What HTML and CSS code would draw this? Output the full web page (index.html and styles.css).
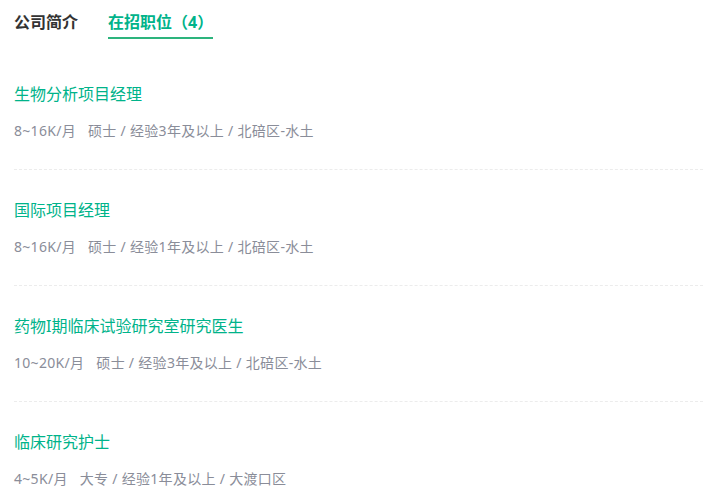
FILE: index.html
```html
<!DOCTYPE html>
<html lang="zh-CN">
<head>
  <meta charset="UTF-8">
  <title>在招职位</title>
  <link rel="stylesheet" href="styles.css">
</head>
<body>
  <div class="tabs">
    <span class="tab">公司简介</span>
    <span class="tab active">在招职位（4）</span>
  </div>

  <ul class="jobs">
    <li class="job">
      <div class="job-title">生物分析项目经理</div>
      <div class="job-meta"><span class="salary">8~16K/月</span>硕士 / 经验3年及以上 / 北碚区-水土</div>
    </li>
    <li class="job">
      <div class="job-title">国际项目经理</div>
      <div class="job-meta"><span class="salary">8~16K/月</span>硕士 / 经验1年及以上 / 北碚区-水土</div>
    </li>
    <li class="job">
      <div class="job-title">药物I期临床试验研究室研究医生</div>
      <div class="job-meta"><span class="salary">10~20K/月</span>硕士 / 经验3年及以上 / 北碚区-水土</div>
    </li>
    <li class="job">
      <div class="job-title">临床研究护士</div>
      <div class="job-meta"><span class="salary">4~5K/月</span>大专 / 经验1年及以上 / 大渡口区</div>
    </li>
  </ul>
</body>
</html>
```

FILE: styles.css
```css
body {
  margin: 0;
  padding: 0 0 0 14px;
  font-family: "Noto Sans", "Noto Sans CJK SC", sans-serif;
  background: #fff;
  overflow: hidden;
}
.tabs {
  display: flex;
  gap: 30px;
  padding-top: 10px;
  margin-bottom: 15px;
}
.tab {
  font-size: 16px;
  line-height: 24px;
  font-weight: bold;
  color: #333;
  padding-bottom: 3px;
  border-bottom: 2px solid transparent;
}
.tab.active {
  color: #00b38a;
  border-bottom-color: #2db47d;
}
.jobs {
  list-style: none;
  margin: 0;
  padding: 0;
}
.job {
  padding: 28px 0 27px;
  border-bottom: 1px dashed #ececec;
}
.job-title {
  font-size: 16px;
  line-height: 24px;
  color: #00b38a;
  margin-bottom: 14px;
}
.job-meta {
  font-size: 14px;
  line-height: 22px;
  color: #8a8d99;
  letter-spacing: 0.3px;
}
.salary {
  margin-right: 12px;
}
```
